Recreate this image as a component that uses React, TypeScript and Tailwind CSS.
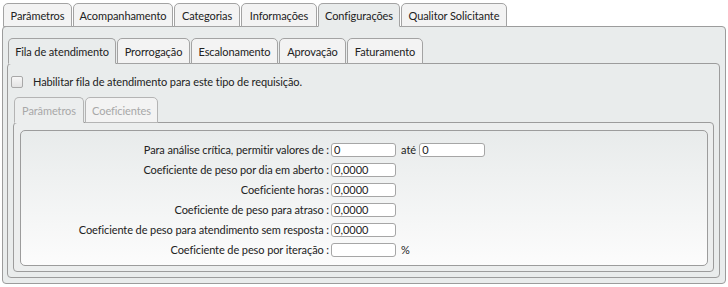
import React from 'react';

const font = { fontFamily: 'Lato, "Noto Sans", sans-serif' };

type Tab = { label: string; w: string; active?: boolean };

const outerTabs: Tab[] = [
  { label: 'Parâmetros', w: 'w-[69px]' },
  { label: 'Acompanhamento', w: 'w-[100px]' },
  { label: 'Categorias', w: 'w-[66px]' },
  { label: 'Informações', w: 'w-[76px]' },
  { label: 'Configurações', w: 'w-[82px]', active: true },
  { label: 'Qualitor Solicitante', w: 'w-[106px]' },
];

const innerTabs: Tab[] = [
  { label: 'Fila de atendimento', w: 'w-[108px]', active: true },
  { label: 'Prorrogação', w: 'w-[73px]' },
  { label: 'Escalonamento', w: 'w-[87px]' },
  { label: 'Aprovação', w: 'w-[67px]' },
  { label: 'Faturamento', w: 'w-[76px]' },
];

const TabButton: React.FC<{ tab: Tab; h: string; muted?: boolean }> = ({ tab, h, muted }) => (
  <div
    className={`${tab.w} ${h} -mb-px flex shrink-0 items-center justify-center overflow-hidden whitespace-nowrap rounded-t-[5px] border text-[11px] tracking-[-0.1px] leading-none ${
      tab.active ? 'bg-[#e9ecec]' : 'bg-[#f3f3f3]'
    } ${muted ? 'border-[#b4b4b4] text-[#a8a8a8]' : 'border-[#a3a3a3] text-[#222]'} ${
      tab.active ? (muted ? 'border-b-[#eceeee] bg-[#eceeee]' : 'border-b-[#e9ecec]') : ''
    }`}
  >
    {tab.label}
  </div>
);

const Field: React.FC<{ value?: string; w?: string }> = ({ value = '', w = 'w-[65px]' }) => (
  <div className={`${w} h-[14px] shrink-0 rounded-[3px] border border-[#a6a6a6] bg-white pl-[2px] text-[11px] leading-[12px] text-[#222]`}>
    {value}
  </div>
);

const rows: { label: string; value: string; extra?: React.ReactNode }[] = [
  {
    label: 'Para análise crítica, permitir valores de :',
    value: '0',
    extra: (
      <>
        <span className="ml-[5px] mr-[3px] text-[11px]">até</span>
        <Field value="0" w="w-[66px]" />
      </>
    ),
  },
  { label: 'Coeficiente de peso por dia em aberto :', value: '0,0000' },
  { label: 'Coeficiente horas :', value: '0,0000' },
  { label: 'Coeficiente de peso para atraso :', value: '0,0000' },
  { label: 'Coeficiente de peso para atendimento sem resposta :', value: '0,0000' },
  { label: 'Coeficiente de peso por iteração :', value: '', extra: <span className="ml-[5px] text-[11px]">%</span> },
];

export default function App() {
  return (
    <div className="h-[287px] w-[728px] bg-white pt-[3px] pl-[2px] text-[#222]" style={font}>
      {/* outer tabs */}
      <div className="flex gap-px pl-px">
        {outerTabs.map((t) => (
          <TabButton key={t.label} tab={t} h="h-[24px]" />
        ))}
      </div>
      <div className="w-[724px] rounded-[4px] border border-[#9c9c9c] bg-[#e9ecec] pt-[11px] pr-[5px] pb-[5px] pl-[4px]">
        {/* inner tabs */}
        <div className="flex gap-px pl-px">
          {innerTabs.map((t) => (
            <TabButton key={t.label} tab={t} h="h-[26px]" />
          ))}
        </div>
        <div className="rounded-[4px] border border-[#9c9c9c] bg-[#e9ecec] pt-[12px] pr-[5px] pb-[5px] pl-[3px]">
          <div className="flex h-[12px] items-center">
            <div className="h-[12px] w-[12px] shrink-0 rounded-[2px] border border-[#a8a8a8] bg-gradient-to-b from-[#f7f7f7] to-[#e3e3e3]" />
            <span className="ml-[10px] text-[11px] tracking-[-0.1px]">Habilitar fila de atendimento para este tipo de requisição.</span>
          </div>
          <div className="mt-[9px] pl-[2px]">
            <div className="flex gap-px pl-px">
              <TabButton tab={{ label: 'Parâmetros', w: 'w-[70px]', active: true }} h="h-[26px]" muted />
              <TabButton tab={{ label: 'Coeficientes', w: 'w-[73px]' }} h="h-[26px]" muted />
            </div>
            <div className="rounded-[4px] border border-[#9c9c9c] bg-[#eceeee] pt-[7px] pr-[5px] pb-[5px] pl-[6px]">
              <div className="flex h-[136px] flex-col gap-[6px] rounded-[5px] border border-[#9c9c9c] bg-gradient-to-b from-[#e8ebeb] to-[#fcfcfc] pt-[12px] pb-[8px]">
                {rows.map((r) => (
                  <div key={r.label} className="flex h-[14px] items-center">
                    <div className="w-[310px] shrink-0 pr-[2px] text-right text-[11px] tracking-[-0.1px] leading-[14px] whitespace-nowrap">{r.label}</div>
                    <Field value={r.value} />
                    {r.extra}
                  </div>
                ))}
              </div>
            </div>
          </div>
        </div>
      </div>
    </div>
  );
}
